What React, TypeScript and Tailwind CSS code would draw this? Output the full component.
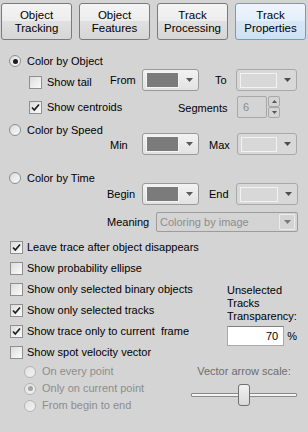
import React from "react";

function Btn({ l1, l2, active }: { l1: string; l2: string; active?: boolean }) {
  return (
    <div
      className={
        "w-[71px] h-[37px] rounded-[3px] border flex flex-col items-center justify-center leading-[13px] text-[11.5px] " +
        (active
          ? "border-[#6e9bd4] bg-[linear-gradient(to_bottom,#eef5fc_0%,#e3eefa_50%,#d7e6f6_50%,#d0e1f4_100%)]"
          : "border-[#7a7a7a] bg-[linear-gradient(to_bottom,#f4f4f4_0%,#ececec_50%,#e0e0e0_50%,#d6d6d6_100%)]")
      }
    >
      <span>{l1}</span>
      <span>{l2}</span>
    </div>
  );
}

function Check({ checked }: { checked?: boolean }) {
  return (
    <div className="w-[13px] h-[13px] shrink-0 border border-[#8e8f8f] bg-[linear-gradient(135deg,#dcdcdc_0%,#fbfbfb_100%)] flex items-center justify-center">
      {checked && (
        <svg width="11" height="11" viewBox="0 0 11 11">
          <path d="M2 5.5 L4.3 8 L9 2.5" stroke="#1e1e1e" strokeWidth="1.7" fill="none" />
        </svg>
      )}
    </div>
  );
}

function Radio({ checked, disabled }: { checked?: boolean; disabled?: boolean }) {
  return (
    <div
      className={
        "w-[12px] h-[12px] shrink-0 rounded-full border flex items-center justify-center " +
        (disabled
          ? "border-[#b4b4b4] bg-[linear-gradient(135deg,#e2e2e2_0%,#f2f2f2_100%)]"
          : "border-[#8e8f8f] bg-[linear-gradient(135deg,#dadada_0%,#fbfbfb_100%)]")
      }
    >
      {checked && (
        <div
          className={
            "w-[5px] h-[5px] rounded-full " + (disabled ? "bg-[#a4a4a4]" : "bg-[#1c1c1c]")
          }
        />
      )}
    </div>
  );
}

function Arrow({ color = "#4a4a4a" }: { color?: string }) {
  return (
    <svg width="7" height="4" viewBox="0 0 7 4">
      <path d="M0 0H7L3.5 4Z" fill={color} />
    </svg>
  );
}

function ColorCombo({ w, dark }: { w: string; dark?: boolean }) {
  return dark ? (
    <div className={w + " h-[22px] rounded-[3px] border border-[#9a9a9a] bg-[linear-gradient(to_bottom,#f2f2f2,#e2e2e2)] flex items-center pl-[3px] pr-[5px]"}>
      <div className="flex-1 h-[16px] bg-[#7b7b7b] border border-[#f4f4f4]" />
      <div className="w-[14px] flex justify-end">
        <Arrow color="#5a5a5a" />
      </div>
    </div>
  ) : (
    <div className={w + " h-[22px] rounded-[3px] border border-[#a8a8a8] bg-[#d8d8d8] flex items-center pl-[3px] pr-[5px]"}>
      <div className="flex-1 h-[15px] border border-[#f2f2f2]" />
      <div className="w-[14px] flex justify-end">
        <Arrow color="#4e4e4e" />
      </div>
    </div>
  );
}

export default function App() {
  return (
    <div className="w-[308px] h-[432px] bg-[#d4d4d4] overflow-hidden text-[11px] text-black font-['Liberation_Sans',Arial,sans-serif] flex flex-col">
      {/* tabs */}
      <div className="flex gap-[7px] pl-[1px] pt-[3px]">
        <Btn l1="Object" l2="Tracking" />
        <Btn l1="Object" l2="Features" />
        <Btn l1="Track" l2="Processing" />
        <Btn l1="Track" l2="Properties" active />
      </div>

      {/* Color by Object */}
      <div className="mt-[13px] h-[16px] flex items-center pl-[9px] gap-[6px]">
        <Radio checked />
        <span>Color by Object</span>
      </div>
      <div className="h-[22px] flex items-center pl-[29px]">
        <div className="w-[81px] flex items-center gap-[5px] pt-[4px]">
          <Check />
          <span>Show tail</span>
        </div>
        <div className="w-[32px]">From</div>
        <ColorCombo w="w-[57px]" dark />
        <div className="w-[37px] pl-[16px]">To</div>
        <ColorCombo w="w-[61px]" />
      </div>
      <div className="mt-[5px] h-[22px] flex items-center pl-[29px]">
        <div className="w-[149px] flex items-center gap-[5px] self-start pt-[3px]">
          <Check checked />
          <span>Show centroids</span>
        </div>
        <div className="w-[59px] pt-[2px]">Segments</div>
        <div className="flex h-[22px]">
          <div className="w-[30px] h-[22px] border border-[#a8a8a8] rounded-[2px] text-[#8d8d8d] pl-[5px] flex items-center">6</div>
          <div className="w-[12px] h-[22px] ml-[1px] flex flex-col">
            <div className="flex-1 border border-[#a8a8a8] rounded-[2px] flex items-center justify-center">
              <svg width="5" height="3" viewBox="0 0 5 3"><path d="M0 3H5L2.5 0Z" fill="#555" /></svg>
            </div>
            <div className="flex-1 border border-[#a8a8a8] rounded-[2px] flex items-center justify-center">
              <svg width="5" height="3" viewBox="0 0 5 3"><path d="M0 0H5L2.5 3Z" fill="#555" /></svg>
            </div>
          </div>
        </div>
      </div>

      {/* Color by Speed */}
      <div className="mt-[4px] h-[16px] flex items-center pl-[9px] gap-[6px]">
        <Radio />
        <span>Color by Speed</span>
      </div>
      <div className="mt-[-5px] h-[22px] flex items-center pl-[110px]">
        <div className="w-[32px] pt-[3px]">Min</div>
        <ColorCombo w="w-[57px]" dark />
        <div className="w-[38px] pl-[10px] pt-[3px]">Max</div>
        <ColorCombo w="w-[60px]" />
      </div>

      {/* Color by Time */}
      <div className="mt-[15px] h-[16px] flex items-center pl-[9px] gap-[6px]">
        <Radio />
        <span>Color by Time</span>
      </div>
      <div className="mt-[-3px] h-[22px] flex items-center pl-[107px]">
        <div className="w-[35px]">Begin</div>
        <ColorCombo w="w-[57px]" dark />
        <div className="w-[37px] pl-[10px]">End</div>
        <ColorCombo w="w-[62px]" />
      </div>
      <div className="mt-[7px] h-[20px] flex items-center pl-[107px]">
        <div className="w-[49px]">Meaning</div>
        <div className="w-[142px] h-[20px] rounded-[2px] border border-[#9c9c9c] flex items-center pl-[3px] pr-[2px] text-[#8d8d8d]">
          <span className="flex-1">Coloring by image</span>
          <div className="w-[16px] h-[16px] border border-[#ececec] rounded-[1px] flex items-center justify-center">
            <Arrow color="#7a7a7a" />
          </div>
        </div>
      </div>

      {/* lower section */}
      <div className="mt-[5px] flex">
        <div className="w-[191px] flex flex-col whitespace-nowrap">
          {[
            ["Leave trace after object disappears", true],
            ["Show probability ellipse", false],
            ["Show only selected binary objects", false],
            ["Show only selected tracks", true],
            ["Show trace only to current  frame", true],
            ["Show spot velocity vector", false],
          ].map(([t, c]) => (
            <div key={t as string} className="h-[21px] flex items-center pl-[10px] gap-[4px]">
              <Check checked={c as boolean} />
              <span className="whitespace-pre">{t as string}</span>
            </div>
          ))}
          {[
            ["On every point", false],
            ["Only on current point", true],
            ["From begin to end", false],
          ].map(([t, c]) => (
            <div key={t as string} className="h-[17px] flex items-center pl-[24px] gap-[6px] text-[#8d8d8d]">
              <Radio disabled checked={c as boolean} />
              <span>{t as string}</span>
            </div>
          ))}
        </div>
        <div className="w-[106px] flex flex-col">
          <div className="mt-[47px] ml-[36px] leading-[13px] flex flex-col">
            <span>Unselected</span>
            <span>Tracks</span>
            <span>Transparency:</span>
          </div>
          <div className="mt-[3px] ml-[36px] flex items-center h-[20px]">
            <div className="w-[59px] h-[20px] bg-white border border-[#a9a9a9] border-t-[#7f7f7f] flex items-center justify-end pr-[5px]">70</div>
            <span className="ml-[3px]">%</span>
          </div>
          <div className="mt-[19px] h-[13px] text-center text-[#6d6d6d] leading-[13px]">Vector arrow scale:</div>
          <div className="mt-[6px] h-[22px] relative">
            <div className="absolute left-0 right-0 top-[9px] h-[4px] border border-[#8a8a8a] bg-[#f4f4f4] rounded-[1px]" />
            <div className="relative mx-auto w-[12px] h-[22px] rounded-[3px] border border-[#6f6f6f] bg-[linear-gradient(to_bottom,#f2f2f2,#d9d9d9)]" />
          </div>
        </div>
      </div>
    </div>
  );
}
